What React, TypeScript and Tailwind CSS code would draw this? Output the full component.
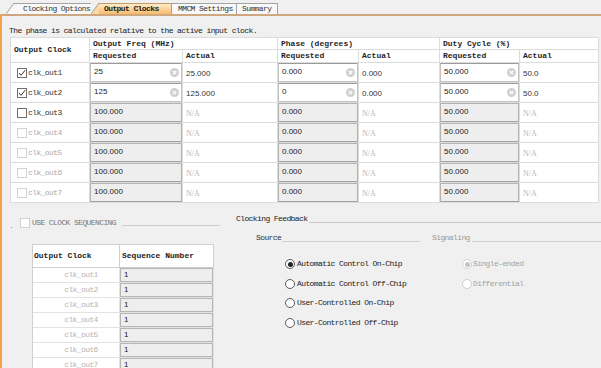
import clsx from "clsx";

type ClkRow = {
  name: string;
  state: "on" | "off" | "disabled";
  freq: string;
  freqAct: string;
  phase: string;
  phaseAct: string;
  duty: string;
  dutyAct: string;
};

const rows: ClkRow[] = [
  { name: "clk_out1", state: "on", freq: "25", freqAct: "25.000", phase: "0.000", phaseAct: "0.000", duty: "50.000", dutyAct: "50.0" },
  { name: "clk_out2", state: "on", freq: "125", freqAct: "125.000", phase: "0", phaseAct: "0.000", duty: "50.000", dutyAct: "50.0" },
  { name: "clk_out3", state: "off", freq: "100.000", freqAct: "N/A", phase: "0.000", phaseAct: "N/A", duty: "50.000", dutyAct: "N/A" },
  { name: "clk_out4", state: "disabled", freq: "100.000", freqAct: "N/A", phase: "0.000", phaseAct: "N/A", duty: "50.000", dutyAct: "N/A" },
  { name: "clk_out5", state: "disabled", freq: "100.000", freqAct: "N/A", phase: "0.000", phaseAct: "N/A", duty: "50.000", dutyAct: "N/A" },
  { name: "clk_out6", state: "disabled", freq: "100.000", freqAct: "N/A", phase: "0.000", phaseAct: "N/A", duty: "50.000", dutyAct: "N/A" },
  { name: "clk_out7", state: "disabled", freq: "100.000", freqAct: "N/A", phase: "0.000", phaseAct: "N/A", duty: "50.000", dutyAct: "N/A" },
];

const mono = "font-['Liberation_Mono',monospace] text-[8px] leading-[10px] tracking-[-0.6px] whitespace-nowrap";
const head = "font-['Liberation_Mono',monospace] text-[8px] leading-[10px] font-bold whitespace-nowrap";
const num = "font-['Liberation_Sans',sans-serif] text-[8px] leading-[10px]";

const Slant = ({ fill }: { fill: string }) => (
  <svg width="8" height="11" viewBox="0 0 8 11" className="block shrink-0">
    <polygon points="0,11 8,0 8,11" fill={fill} />
    <line x1="0" y1="11" x2="8" y2="0" stroke="#a3a3a3" strokeWidth="1" />
  </svg>
);

const ClearIcon = () => (
  <svg width="9" height="9" viewBox="0 0 9 9" className="shrink-0">
    <circle cx="4.5" cy="4.5" r="4.5" fill="#d0d0d0" />
    <path d="M2.8 2.8 L6.2 6.2 M6.2 2.8 L2.8 6.2" stroke="#fff" strokeWidth="1.2" />
  </svg>
);

const Check = ({ state }: { state: "on" | "off" | "disabled" }) => (
  <div
    className={clsx(
      "flex h-[10px] w-[10px] shrink-0 items-center justify-center border bg-white",
      state === "disabled" ? "border-[#d2d2d2]" : "border-[#6e6e6e]",
    )}
  >
    {state === "on" && (
      <svg width="8" height="8" viewBox="0 0 8 8">
        <path d="M1 4 L3 6.3 L7.2 1.2" stroke="#333" strokeWidth="1" fill="none" />
      </svg>
    )}
  </div>
);

const Radio = ({ on, disabled }: { on?: boolean; disabled?: boolean }) => (
  <div
    className={clsx(
      "flex h-[10px] w-[10px] shrink-0 items-center justify-center rounded-full border bg-white",
      disabled ? "border-[#cfcfcf]" : "border-[#5a5a5a]",
    )}
  >
    {on && <div className={clsx("h-[5px] w-[5px] rounded-full", disabled ? "bg-[#c4c4c4]" : "bg-[#222]")} />}
  </div>
);

const InputBox = ({ value, editable }: { value: string; editable: boolean }) => (
  <div
    className={clsx(
      "flex h-full items-center border pl-[3px] pr-[2px] text-[#222]",
      editable ? "border-[#c2c2c2] border-t-[#9b9b9b] bg-white" : "border-[#b3b3b3] border-b-[#a2a2a2] bg-[#eeeeee]",
    )}
  >
    <span className={clsx(num, "-mt-[2px] flex-1")}>{value}</span>
    {editable && <ClearIcon />}
  </div>
);

const ActualCell = ({ value }: { value: string }) =>
  value === "N/A" ? (
    <span className="pl-[3px] pt-[6px] font-['Liberation_Serif',serif] text-[8px] leading-[10px] text-[#b8b8b8]">N/A</span>
  ) : (
    <span className={clsx(num, "pl-[3px] pt-[6px] text-[#333]")}>{value}</span>
  );

const cell = "border-b border-r border-[#dcdcdc]";

export default function App() {
  return (
    <div className="h-[368px] w-[601px] overflow-hidden bg-[#f0f0f0] text-[#1e1e1e]">
      {/* tabs */}
      <div className="flex h-[14px] items-end pl-[6px]">
        <Slant fill="#f8f8f8" />
        <div className={clsx(mono, "flex h-[11px] w-[77px] items-center border-t border-[#a3a3a3] bg-[#f8f8f8] pl-[9px] text-[#333]")}>
          Clocking Options
        </div>
        <Slant fill="#fbd9a0" />
        <div
          className={clsx(
            mono,
            "flex h-[11px] w-[73px] items-center border-t border-r border-[#c79a64] bg-gradient-to-b from-[#fdebc8] to-[#f6bb6b] pl-[5px] font-bold text-[#222]",
          )}
        >
          Output Clocks
        </div>
        <div className={clsx(mono, "flex h-[11px] w-[65px] items-center border-t border-r border-[#a3a3a3] bg-[#f8f8f8] pl-[6px] text-[#333]")}>
          MMCM Settings
        </div>
        <div className={clsx(mono, "flex h-[11px] w-[41px] items-center border-t border-r border-[#a3a3a3] bg-[#f8f8f8] pl-[5px] text-[#333]")}>
          Summary
        </div>
      </div>

      <div className="h-[354px] border-l-2 border-t-2 border-l-[#f2a44c] border-t-[#cfa77e] pl-[7px]">
        <div className={clsx(mono, "mt-[10px] text-[#222]")}>The phase is calculated relative to the active input clock.</div>

        {/* output clocks table */}
        <div className="ml-[1px] mt-[1px] w-[588px] border-l border-t border-[#dcdcdc] bg-white">
          <div className="grid grid-cols-[79px_93px_95px_81px_81px_80px_79px] grid-rows-[12px_13px]">
            <div className={clsx(cell, head, "row-span-2 flex items-center pl-[3px]")}>Output Clock</div>
            <div className={clsx(cell, head, "col-span-2 flex items-center pl-[3px]")}>Output Freq (MHz)</div>
            <div className={clsx(cell, head, "col-span-2 flex items-center pl-[3px]")}>Phase (degrees)</div>
            <div className={clsx(cell, head, "col-span-2 flex items-center pl-[3px]")}>Duty Cycle (%)</div>
            <div className={clsx(cell, head, "flex items-center pl-[3px]")}>Requested</div>
            <div className={clsx(cell, head, "flex items-center pl-[3px]")}>Actual</div>
            <div className={clsx(cell, head, "flex items-center pl-[3px]")}>Requested</div>
            <div className={clsx(cell, head, "flex items-center pl-[3px]")}>Actual</div>
            <div className={clsx(cell, head, "flex items-center pl-[3px]")}>Requested</div>
            <div className={clsx(cell, head, "flex items-center pl-[3px]")}>Actual</div>
          </div>
          {rows.map((r) => {
            const editable = r.state === "on";
            return (
              <div key={r.name} className="grid h-[20px] grid-cols-[79px_93px_95px_81px_81px_80px_79px]">
                <div className={clsx(cell, "flex items-center gap-[1px] pl-[6px]")}>
                  <Check state={r.state} />
                  <span className={clsx(mono, r.state === "disabled" ? "text-[#ababab]" : "text-[#333]")}>{r.name}</span>
                </div>
                <div className={clsx(cell)}>
                  <InputBox value={r.freq} editable={editable} />
                </div>
                <div className={clsx(cell, "flex")}>
                  <ActualCell value={r.freqAct} />
                </div>
                <div className={clsx(cell)}>
                  <InputBox value={r.phase} editable={editable} />
                </div>
                <div className={clsx(cell, "flex")}>
                  <ActualCell value={r.phaseAct} />
                </div>
                <div className={clsx(cell)}>
                  <InputBox value={r.duty} editable={editable} />
                </div>
                <div className={clsx(cell, "flex")}>
                  <ActualCell value={r.dutyAct} />
                </div>
              </div>
            );
          })}
        </div>

        {/* lower section */}
        <div className="flex">
          <div className="w-[221px]">
            <div className="mt-[15px] flex h-[10px] items-center">
              <div className="ml-[2px] h-px w-px self-end bg-[#9a9a9a]" />
              <div className="ml-[8px]">
                <Check state="disabled" />
              </div>
              <span className={clsx(mono, "ml-[2px] text-[#777]")}>USE CLOCK SEQUENCING</span>
              <div className="mb-[2px] ml-[6px] mr-[10px] h-px flex-1 self-end bg-[#cdcdcd]" />
            </div>

            <div className="ml-[23px] mt-[16px] w-[182px] border-l border-t border-[#d0d0d0] bg-white">
              <div className="grid h-[23px] grid-cols-[87px_94px]">
                <div className={clsx(head, "flex items-center border-b border-r border-[#d0d0d0] pl-[1px] text-[#222]")}>Output Clock</div>
                <div className={clsx(head, "flex items-center border-b border-r border-[#d0d0d0] pl-[2px] text-[#222]")}>Sequence Number</div>
              </div>
              {rows.map((r) => (
                <div key={r.name} className="grid h-[15px] grid-cols-[87px_94px]">
                  <div className={clsx(mono, "flex items-center justify-center border-b border-r border-[#e2e2e2] pl-[10px] text-[#b4b4b4]")}>
                    {r.name}
                  </div>
                  <div className="border-b border-r border-[#e2e2e2]">
                    <div className="flex h-full items-center border border-[#b5b5b5] bg-[#eeeeee] pl-[3px]">
                      <span className={clsx(num, "text-[#222]")}>1</span>
                    </div>
                  </div>
                </div>
              ))}
            </div>
          </div>

          <div className="flex-1">
            <div className="mt-[11px] flex h-[10px] items-end pl-[6px]">
              <span className={clsx(mono, "text-[#222]")}>Clocking Feedback</span>
              <div className="mb-[1px] ml-[2px] h-px flex-1 bg-[#c9c9c9]" />
            </div>

            <div className="mt-[9px] flex pl-[26px]">
              <div className="w-[164px]">
                <div className="flex h-[10px] items-end">
                  <span className={clsx(mono, "text-[#333]")}>Source</span>
                  <div className="mb-[1px] ml-[1px] h-px flex-1 bg-[#cfcfcf]" />
                </div>
                <div className="mt-[16px] flex flex-col gap-[9.5px] pl-[29px]">
                  {[
                    { label: "Automatic Control On-Chip", on: true },
                    { label: "Automatic Control Off-Chip" },
                    { label: "User-Controlled On-Chip" },
                    { label: "User-Controlled Off-Chip" },
                  ].map((o) => (
                    <div key={o.label} className="flex h-[10px] items-center gap-[2px]">
                      <Radio on={o.on} />
                      <span className={clsx(mono, "text-[#222]")}>{o.label}</span>
                    </div>
                  ))}
                </div>
              </div>
              <div className="ml-[12px] flex-1">
                <div className="flex h-[10px] items-end">
                  <span className={clsx(mono, "text-[#9a9a9a]")}>Signaling</span>
                  <div className="mb-[1px] ml-[2px] h-px flex-1 bg-[#cfcfcf]" />
                </div>
                <div className="mt-[16px] flex flex-col gap-[9.5px] pl-[30px]">
                  <div className="flex h-[10px] items-center gap-[1px]">
                    <Radio on disabled />
                    <span className={clsx(mono, "text-[#a3a3a3]")}>Single-ended</span>
                  </div>
                  <div className="flex h-[10px] items-center gap-[1px]">
                    <Radio disabled />
                    <span className={clsx(mono, "text-[#a3a3a3]")}>Differential</span>
                  </div>
                </div>
              </div>
            </div>
          </div>
        </div>
      </div>
    </div>
  );
}
